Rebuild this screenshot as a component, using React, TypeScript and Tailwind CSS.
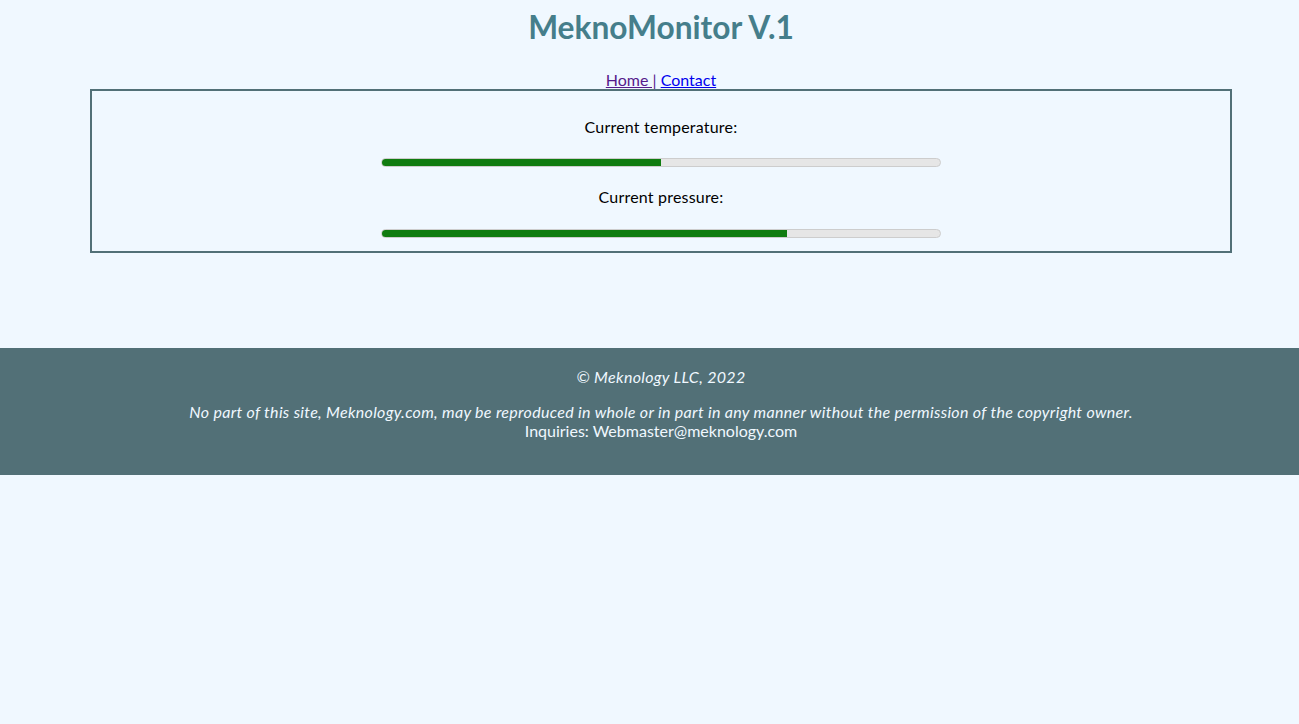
export default function App() {
  const font = { fontFamily: "Lato, 'Noto Sans', sans-serif" };
  return (
    <div className="min-h-[724px] bg-[#f0f8ff] text-black" style={font}>
      <div className="w-[1322px]">
        <h1 className="pt-[8px] text-center text-[31.7px] font-bold leading-[38px] text-[#457e8b]">
          MeknoMonitor V.1
        </h1>
        <div className="mt-[24px] text-center text-[16px] leading-[19px]">
          <a href="#" className="text-[#551a8b] underline">Home |</a>{" "}
          <a href="#" className="text-[#0000ee] underline">Contact</a>
        </div>
        <div className="ml-[90px] w-[1142px] border-2 border-[#527077] pb-[13px] pt-[26px]">
          <div className="text-center text-[16px] leading-[19px] tracking-[0.2px]">Current temperature:</div>
          <div className="mx-auto mt-[22px] h-[9px] w-[560px] overflow-hidden rounded-full border border-[#cdcdcd] bg-[#e6e6e6]">
            <div className="h-full w-1/2 bg-[#107c10]" />
          </div>
          <div className="mt-[20px] text-center text-[16px] leading-[19px] tracking-[0.2px]">Current pressure:</div>
          <div className="mx-auto mt-[23px] h-[9px] w-[560px] overflow-hidden rounded-full border border-[#cdcdcd] bg-[#e6e6e6]">
            <div className="h-full w-[72.5%] bg-[#107c10]" />
          </div>
        </div>
      </div>
      <div className="mt-[95px] h-[127px] w-full bg-[#527077] text-[#f0f8ff]">
        <div className="w-[1322px] pt-[19px] text-center text-[16px] leading-[19px]">
          <p className="italic tracking-[0.32px]">© Meknology LLC, 2022</p>
          <p className="mt-[16px] italic tracking-[0.31px]">
            No part of this site, Meknology.com, may be reproduced in whole or in part in any manner without the permission of the copyright owner.
          </p>
          <p>Inquiries: Webmaster@meknology.com</p>
        </div>
      </div>
    </div>
  );
}
